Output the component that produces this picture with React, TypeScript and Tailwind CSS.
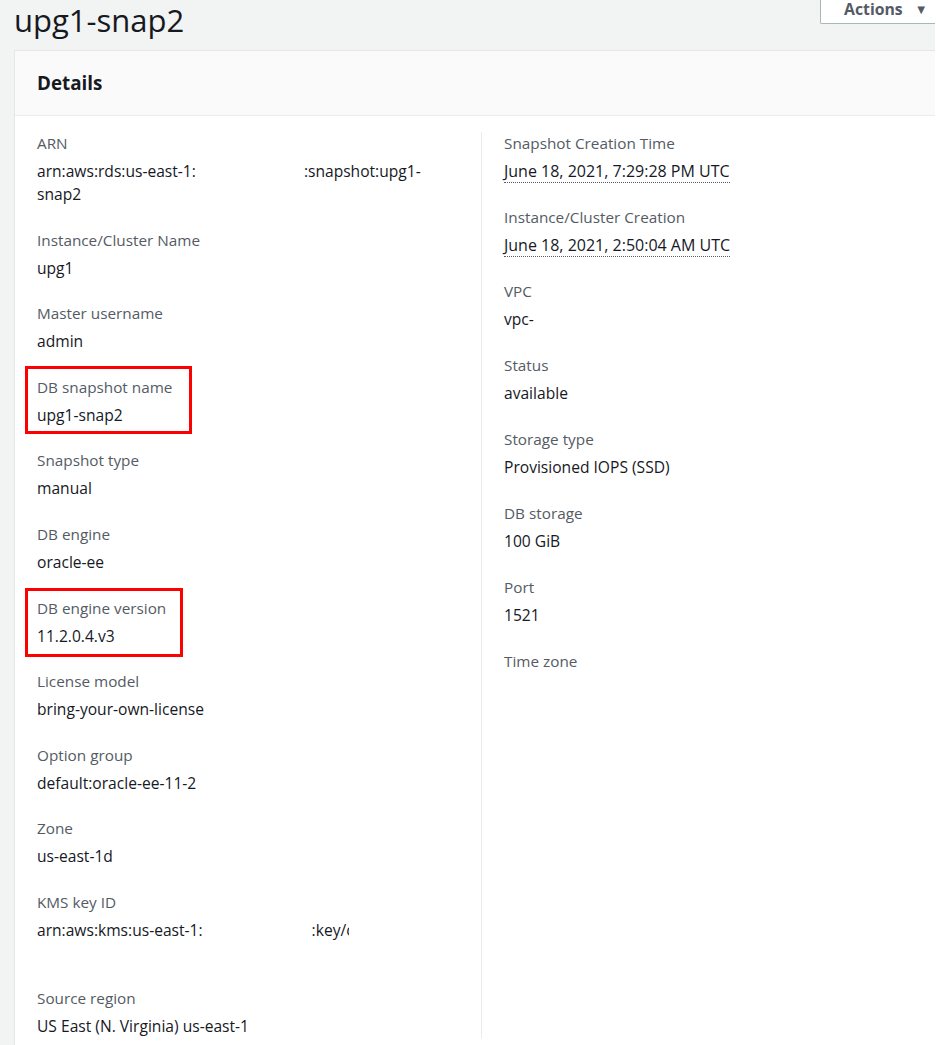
import React from 'react';

const font = { fontFamily: '"Open Sans", "Noto Sans", sans-serif' };

type Row = { label: string; value?: React.ReactNode; box?: string };

function Field({ label, value, box }: Row) {
  return (
    <div className="relative">
      {box && <div className={`absolute border-[3px] border-[#ff0000] ${box}`} />}
      <div className="text-[15.3px] leading-[22px] text-[#545b64]">{label}</div>
      {value !== undefined && (
        <div className="mt-[6px] text-[15.6px] leading-[23px] text-[#16191f] whitespace-nowrap">{value}</div>
      )}
    </div>
  );
}

function DateVal({ children }: { children: React.ReactNode }) {
  return (
    <span className="inline-block text-[16px] leading-[22px] border-b border-dotted border-[#545b64]">{children}</span>
  );
}

export default function App() {
  const left: Row[] = [
    {
      label: 'ARN',
      value: (
        <>
          arn:aws:rds:us-east-1:<span className="inline-block w-[108px]" />:snapshot:upg1-
          <br />
          snap2
        </>
      ),
    },
    { label: 'Instance/Cluster Name', value: 'upg1' },
    { label: 'Master username', value: 'admin' },
    { label: 'DB snapshot name', value: 'upg1-snap2', box: '-left-[12px] -top-[10px] w-[167px] h-[68px]' },
    { label: 'Snapshot type', value: 'manual' },
    { label: 'DB engine', value: 'oracle-ee' },
    { label: 'DB engine version', value: '11.2.0.4.v3', box: '-left-[12px] -top-[9px] w-[158px] h-[69px]' },
    { label: 'License model', value: 'bring-your-own-license' },
    { label: 'Option group', value: 'default:oracle-ee-11-2' },
    { label: 'Zone', value: 'us-east-1d' },
    {
      label: 'KMS key ID',
      value: (
        <>
          <div>
            arn:aws:kms:us-east-1:<span className="inline-block w-[109px]" />:key/
            <span className="inline-block w-[3px] overflow-hidden align-bottom">c</span>
          </div>
          <div className="h-[22px]" />
        </>
      ),
    },
    { label: 'Source region', value: 'US East (N. Virginia) us-east-1' },
  ];

  const right: Row[] = [
    { label: 'Snapshot Creation Time', value: <DateVal>June 18, 2021, 7:29:28 PM UTC</DateVal> },
    { label: 'Instance/Cluster Creation', value: <DateVal>June 18, 2021, 2:50:04 AM UTC</DateVal> },
    { label: 'VPC', value: 'vpc-' },
    { label: 'Status', value: 'available' },
    { label: 'Storage type', value: 'Provisioned IOPS (SSD)' },
    { label: 'DB storage', value: '100 GiB' },
    { label: 'Port', value: '1521' },
    { label: 'Time zone' },
  ];

  return (
    <div className="flex min-h-[1045px] w-[947px] bg-white" style={font}>
      <div className="w-[935px] bg-[#f2f3f3] overflow-hidden">
        <div className="flex h-[50px] items-start justify-between pl-[14px]">
          <h1 className="text-[31px] leading-[40px] text-[#16191f]">upg1-snap2</h1>
          <button className="flex h-[24px] w-[115px] items-start gap-[12px] rounded-bl-[2px] border-l border-b border-[#aab7b8] bg-white pl-[23px] pt-[1px] text-[15.8px] leading-[16px] font-bold text-[#545b64]">
            Actions
            <span className="text-[13px] leading-[16px]">▼</span>
          </button>
        </div>
        <div className="ml-[14px] min-h-[995px] border-l border-t border-[#e4e7e7] bg-white">
          <div className="flex h-[65px] items-center border-b border-[#eaeded] bg-[#fafafa] pl-[22px]">
            <h2 className="text-[18.8px] font-bold text-[#16191f]">Details</h2>
          </div>
          <div className="grid grid-cols-[466px_1fr] pt-[16px]">
            <div className="flex flex-col gap-y-[22.6px] pl-[22px]">
              {left.map((r) => (
                <Field key={r.label} {...r} />
              ))}
            </div>
            <div className="flex flex-col gap-y-[23px] border-l border-[#eaeded] pl-[22px]">
              {right.map((r) => (
                <Field key={r.label} {...r} />
              ))}
            </div>
          </div>
        </div>
      </div>
    </div>
  );
}
